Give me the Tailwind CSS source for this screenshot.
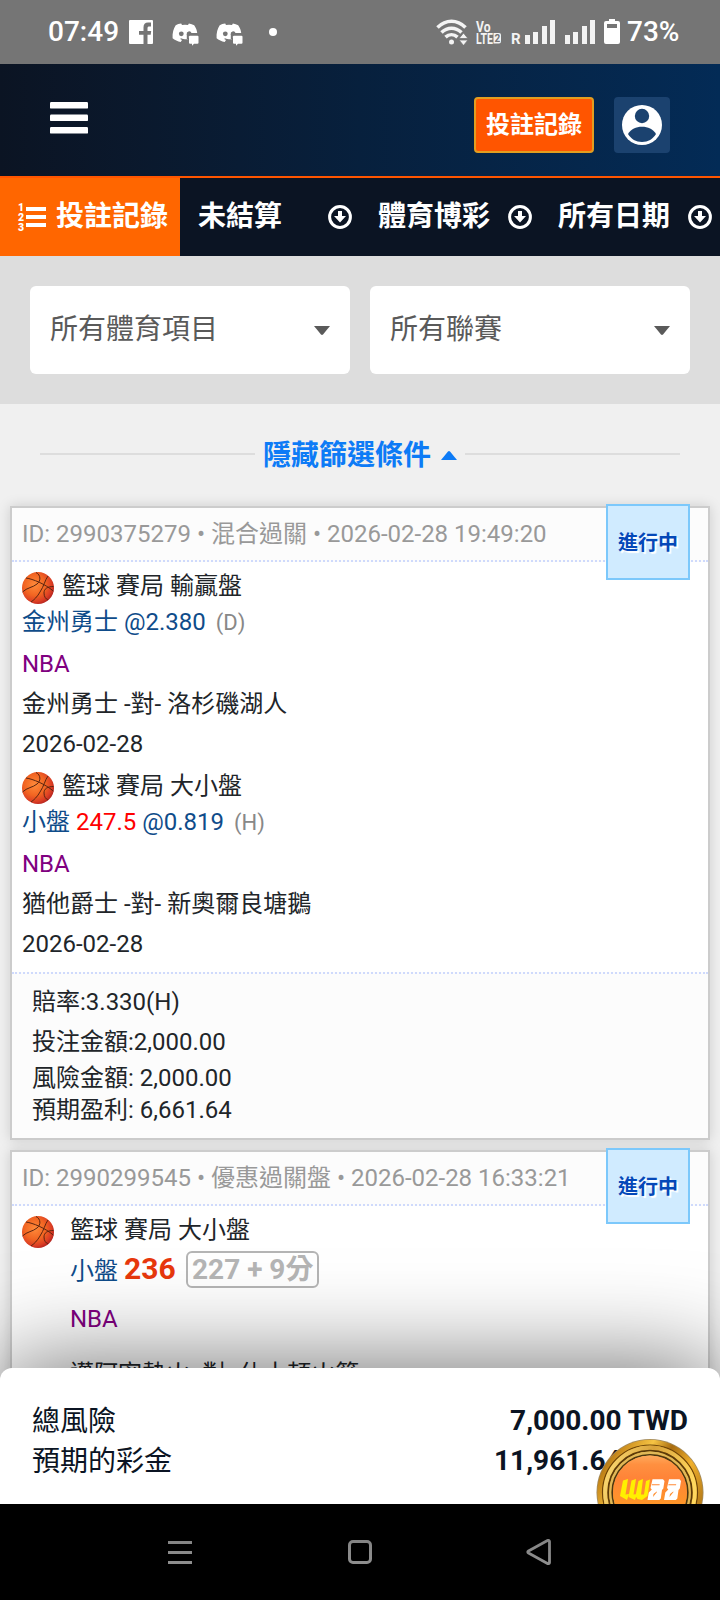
<!DOCTYPE html>
<html lang="zh-Hant">
<head>
<meta charset="utf-8">
<title>投註記錄</title>
<script src="https://cdn.jsdelivr.net/npm/@tailwindcss/browser@4"></script>
</head>
<body class="bg-black">
<svg class="absolute h-0 w-0" aria-hidden="true">
  <defs>
    <radialGradient id="ballFill" cx=".4" cy=".4" r=".66">
      <stop offset="0" stop-color="#ff8a3a"/><stop offset=".5" stop-color="#f26522"/><stop offset=".8" stop-color="#dc3e24"/><stop offset="1" stop-color="#ac1e1e"/>
    </radialGradient>
    <symbol id="ball" viewBox="0 0 32 32">
      <circle cx="16" cy="16" r="16" fill="url(#ballFill)"/>
      <g fill="none" stroke="#5a2410" stroke-width="1">
        <path d="M4 6C11 7 23 12 31.300 19"/>
        <path d="M14 .5C19 3 19 9 15 12C11 15.500 5 15.500 .5 20"/>
        <path d="M26 4C23 8 22 14 18 20C15.500 24.500 12 28 9 30"/>
        <path d="M31.500 14.500C25 14.500 22 17 22 21C22 25 24 27 26 28"/>
      </g>
    </symbol>
    <symbol id="down" viewBox="0 0 24 24">
      <circle cx="12" cy="12" r="10.400" fill="none" stroke="#fff" stroke-width="3"/>
      <path d="M10 6h4v5h4L12 17.500 6 11h4z" fill="#fff"/>
    </symbol>
    <symbol id="chat" viewBox="0 0 27 23">
      <path fill="#fff" d="M9.200.5 10 2a22 22 0 0 1 6 0l.9-1.500c2 .3 3.800.9 5.300 1.800 1.800 2.600 2.700 5 3 7.700H19.500a2.500 2.500 0 1 0-2 3.400V14.500l-1.500.2v1.500c-3 .2-5-.1-7-1l-.8.700 1.800 1-1.300 2.200C5.800 18.400 2.500 17 .6 15.300.2 10 1.500 5.500 3.700 2.300 5.300 1.300 7.200.7 9.200.5z"/>
      <circle cx="9.300" cy="10.800" r="2.400" fill="#757575"/>
      <path fill="#757575" d="M14.800 11h12v2h-10v3h-2z"/>
      <path fill="#fff" d="M18 12.800h7.500a1 1 0 0 1 1 1v6a1 1 0 0 1-1 1h-3.500l-2 2v-2h-2a1 1 0 0 1-1-1v-6a1 1 0 0 1 1-1z"/>
    </symbol>
  </defs>
</svg>

<div class="relative flex h-[1600px] w-[720px] flex-col overflow-hidden bg-[#f0f0f0] font-['Roboto','Noto_Sans_CJK_TC',sans-serif] text-2xl text-[#212529]">

  <!-- System status bar -->
  <div class="flex h-16 shrink-0 items-center bg-[#757575] pl-12 text-[28px] font-medium text-white">
    <span class="w-[81px]">07:49</span>
    <svg class="h-6 w-6" viewBox="0 0 24 24"><path fill="#fff" d="M1 0h22a1 1 0 0 1 1 1v22a1 1 0 0 1-1 1h-4.500v-9.300h3.200l.5-3.600h-3.700V8.200c0-1.200.5-1.800 1.800-1.800H22V2.500h-3c-3 0-4.500 1.700-4.500 4.700v3.900H10v3.600h4.500V24H1a1 1 0 0 1-1-1V1a1 1 0 0 1 1-1z"/></svg>
    <svg class="mt-1 ml-[19px] h-[23px] w-[27px]"><use href="#chat"/></svg>
    <svg class="mt-1 ml-[17px] h-[23px] w-[27px]"><use href="#chat"/></svg>
    <span class="ml-[26px] h-2 w-2 rounded-full bg-white"></span>
    <svg class="ml-[159px] h-[26px] w-[32px]" viewBox="0 0 32 26">
      <g fill="none" stroke="#f3f3f3" stroke-width="3.600">
        <path d="M1.500 8.500C10 .2 21 .2 29.500 8.500"/><path d="M5.500 13.500c6-5.600 14-5.600 20 0"/><path d="M9.500 18.200c3.600-3.300 8.400-3.300 12 0"/>
      </g>
      <circle cx="15.500" cy="23" r="2.500" fill="#f3f3f3"/>
      <path fill="#f3f3f3" stroke="#757575" stroke-width=".8" d="M27.500 14l4.500 5.500h-9zM27.500 26.500l4.500-5.500h-9z"/>
    </svg>
    <svg class="ml-2 h-[26px] w-[26px] overflow-visible" viewBox="0 0 26 26" fill="#f3f3f3">
      <g font-family="Roboto" font-weight="700"><text x="0" y="12.500" font-size="15.500" textLength="14.500" lengthAdjust="spacingAndGlyphs">Vo</text><text x="0" y="24.500" font-size="15.500" textLength="17" lengthAdjust="spacingAndGlyphs">LTE</text></g>
      <path d="M17.500 14h5.500a2 2 0 0 1 2 2v6.500a2 2 0 0 1-2 2h-5.500z"/>
      <text x="18.500" y="23" font-family="Roboto" font-weight="700" font-size="10" fill="#757575">2</text>
    </svg>
    <span class="mt-[14px] ml-[9px] w-[14px] text-[15px] leading-none font-bold text-[#f3f3f3]">R</span>
    <svg class="h-6 w-[30px]" viewBox="0 0 30 24" fill="#f3f3f3"><path d="M0 15h5v9H0zM8 12h5v12H8zM17 6h5v18H17zM25 0h5v24h-5z"/></svg>
    <svg class="ml-[10px] h-6 w-[30px]" viewBox="0 0 30 24" fill="#f3f3f3"><path d="M0 15h5v9H0zM8 12h5v12H8zM17 6h5v18H17zM25 0h5v24h-5z"/></svg>
    <svg class="-mt-px ml-[9px] h-[25px] w-4" viewBox="0 0 16 25"><path fill="#fff" d="M5 0h6v2h3a2 2 0 0 1 2 2v19a2 2 0 0 1-2 2H2a2 2 0 0 1-2-2V4a2 2 0 0 1 2-2h3z"/><path fill="#757575" d="M3 5h10v4H3z"/></svg>
    <span class="ml-[7px]">73%</span>
  </div>

  <!-- Site header -->
  <header class="flex h-[114px] shrink-0 items-center border-b-2 border-[#ff5500] bg-linear-to-r from-[#0b1423] via-[#07203d] to-[#032b56] pt-[10px] pr-[50px] pl-[50px]">
    <svg class="-mt-[15px] h-8 w-[38px]" viewBox="0 0 38 32" fill="#fff"><rect width="38" height="6.600" rx="1.200"/><rect y="12.500" width="38" height="6.600" rx="1.200"/><rect y="25" width="38" height="6.600" rx="1.200"/></svg>
    <button class="ml-auto flex h-14 w-[120px] items-center justify-center rounded border-2 border-[#e29e20] bg-[#ff5500] font-bold text-white">投註記錄</button>
    <div class="ml-5 flex h-14 w-14 items-center justify-center rounded bg-[#1b426f]">
      <svg class="h-10 w-10" viewBox="0 0 40 40"><circle cx="20" cy="20" r="20" fill="#fff"/><circle cx="20" cy="11" r="7.200" fill="#1b426f"/><path fill="#1b426f" d="M6 29C9 24 14 21.800 20 21.800s11 2.200 14 7.200c-3 5-8 8-14 8s-11-3-14-8z"/></svg>
    </div>
  </header>

  <!-- Tabs -->
  <nav class="grid h-[78px] shrink-0 grid-cols-4 bg-[#0b1423] text-[28px] font-bold text-white">
    <div class="flex items-center bg-[#ff6600] pl-[18px]">
      <svg class="-mt-px h-[30px] w-7 shrink-0 overflow-visible" viewBox="0 0 28 30" fill="#fff"><path d="M8 5h20v4H8zM8 13h20v4H8zM8 21h20v4H8z"/><g font-family="Roboto" font-weight="900" font-size="10.500"><text x="0" y="9">1</text><text x="0" y="19">2</text><text x="0" y="28.500">3</text></g></svg>
      <span class="ml-[10px] whitespace-nowrap">投註記錄</span>
    </div>
    <div class="flex items-center justify-between pr-[8px] pl-[18px]"><span>未結算</span><svg class="h-6 w-6 shrink-0"><use href="#down"/></svg></div>
    <div class="flex items-center justify-between pr-[8px] pl-[18px]"><span>體育博彩</span><svg class="h-6 w-6 shrink-0"><use href="#down"/></svg></div>
    <div class="flex items-center justify-between pr-[8px] pl-[18px]"><span>所有日期</span><svg class="h-6 w-6 shrink-0"><use href="#down"/></svg></div>
  </nav>

  <!-- Filters -->
  <section class="flex h-[148px] shrink-0 items-center gap-5 bg-[#ddd] px-[30px] text-[28px] text-[#5a5a5a]">
    <div class="flex h-[88px] flex-1 items-center justify-between rounded-md bg-white px-5"><span>所有體育項目</span><svg class="h-[9px] w-4" viewBox="0 0 16 9"><path fill="#5a5a5a" d="M0 0h16L9 8.500q-1 .8-2 0z"/></svg></div>
    <div class="flex h-[88px] flex-1 items-center justify-between rounded-md bg-white px-5"><span>所有聯賽</span><svg class="h-[9px] w-4" viewBox="0 0 16 9"><path fill="#5a5a5a" d="M0 0h16L9 8.500q-1 .8-2 0z"/></svg></div>
  </section>
  <div class="flex h-[102px] shrink-0 items-center px-10 text-[28px] font-bold text-[#0d7bf6]">
    <span class="mb-[2px] h-[2px] flex-1 bg-[#ddd]"></span>
    <span class="ml-2 pt-[2px]">隱藏篩選條件</span>
    <svg class="mr-2 ml-[10px] h-[9px] w-4" viewBox="0 0 16 9"><path fill="#0d7bf6" d="M0 9h16L9 .5Q8-.3 7 .5z"/></svg>
    <span class="mb-[2px] h-[2px] flex-1 bg-[#ddd]"></span>
  </div>

  <!-- Bet slips -->
  <main class="flex flex-col gap-[10px] px-[10px]">
    <article class="relative border-2 border-[#ccc] bg-white shadow-[0_0_12px_rgba(0,0,0,0.15)]">
      <div class="h-[54px] border-b-2 border-dotted border-[#cfdafc] bg-[#fcfcfc] px-[10px] leading-[52px] text-[#999]">ID: 2990375279 • 混合過關 • 2026-02-28 19:49:20</div>
      <div class="absolute -top-1 right-[18px] flex h-[76px] w-[84px] items-center justify-center border-2 border-[#7cc8fb] bg-[#d0ebff] pt-px text-xl font-bold text-[#0548b8] [text-shadow:2px_2px_1px_#fff]">進行中</div>
      <div class="px-[10px] pt-1 pb-[6px]">
        <div class="pb-[2px]">
          <div class="flex h-10 items-center gap-2"><svg class="mt-1 h-8 w-8"><use href="#ball"/></svg><span>籃球 賽局 輸贏盤</span></div>
          <div class="h-8 leading-8 text-[#0f4c8a]">金州勇士 @2.380 <span class="ml-1 text-[22px] text-[#888]">(D)</span></div>
          <div class="mt-[6px] h-10 leading-10 text-[#800080]">NBA</div>
          <div class="h-10 leading-10">金州勇士 -對- 洛杉磯湖人</div>
          <div class="h-10 leading-10">2026-02-28</div>
        </div>
        <div class="pb-[2px]">
          <div class="flex h-10 items-center gap-2"><svg class="mt-1 h-8 w-8"><use href="#ball"/></svg><span>籃球 賽局 大小盤</span></div>
          <div class="h-8 leading-8 text-[#0f4c8a]">小盤 <span class="text-[#f00]">247.5</span> @0.819 <span class="ml-1 text-[22px] text-[#888]">(H)</span></div>
          <div class="mt-[6px] h-10 leading-10 text-[#800080]">NBA</div>
          <div class="h-10 leading-10">猶他爵士 -對- 新奧爾良塘鵝</div>
          <div class="h-10 leading-10">2026-02-28</div>
        </div>
      </div>
      <div class="border-t-2 border-dotted border-[#cfdafc] bg-[#fcfcfc] px-5 pt-2 pb-3">
        <div class="h-10 leading-10">賠率:3.330(H)</div>
        <div class="h-10 leading-10">投注金額:2,000.00</div>
        <div class="h-8 leading-8">風險金額: 2,000.00</div>
        <div class="h-8 leading-8">預期盈利: 6,661.64</div>
      </div>
    </article>

    <article class="relative h-[300px] border-2 border-[#ccc] bg-white shadow-[0_0_12px_rgba(0,0,0,0.15)]">
      <div class="h-[54px] border-b-2 border-dotted border-[#cfdafc] bg-[#fcfcfc] px-[10px] leading-[52px] text-[#999]">ID: 2990299545 • 優惠過關盤 • 2026-02-28 16:33:21</div>
      <div class="absolute -top-1 right-[18px] flex h-[76px] w-[84px] items-center justify-center border-2 border-[#7cc8fb] bg-[#d0ebff] pt-px text-xl font-bold text-[#0548b8] [text-shadow:2px_2px_1px_#fff]">進行中</div>
      <div class="flex gap-4 px-[10px] pt-1">
        <svg class="mt-[6px] h-8 w-8"><use href="#ball"/></svg>
        <div>
          <div class="h-10 leading-10">籃球 賽局 大小盤</div>
          <div class="flex h-[38px] items-baseline leading-[38px] text-[#0f4c8a]">小盤<b class="ml-[6px] w-[52px] text-[30px] font-bold text-[#e8380d]">236</b><b class="ml-[10px] h-[37px] rounded-md border-2 border-[#b5b5b5] px-1 text-[28px] leading-[33px] text-[#b5b5b5]">227 + 9分</b></div>
          <div class="mt-[11px] h-10 leading-10 text-[#800080]">NBA</div>
          <div class="mt-[15px] h-10 leading-10">邁阿密熱火 -對- 休士頓火箭</div>
        </div>
      </div>
    </article>
  </main>

  <!-- Totals sheet, pinned above the system navigation -->
  <footer class="absolute inset-x-0 bottom-0">
    <div class="relative h-[136px] rounded-t-xl bg-white px-8 pt-[33px] text-[28px] leading-10 text-[#0b1423] shadow-[0_0_100px_rgba(0,0,0,0.6)]">
      <div class="flex justify-between"><span class="pt-px leading-[39px]">總風險</span><span class="font-bold">7,000.00 TWD</span></div>
      <div class="flex justify-between"><span class="pt-px leading-[39px]">預期的彩金</span><span class="font-bold">11,961.64 TWD</span></div>
      <svg class="absolute top-[71px] left-[596px] h-[65px] w-[108px]" viewBox="0 0 108 65">
        <defs>
          <linearGradient id="gold" x1="0" y1="0" x2="1" y2=".6"><stop offset="0" stop-color="#6a3f06"/><stop offset=".2" stop-color="#c98a1c"/><stop offset=".4" stop-color="#f6c444"/><stop offset=".55" stop-color="#a86c10"/><stop offset=".75" stop-color="#f0b02c"/><stop offset="1" stop-color="#b57a18"/></linearGradient>
          <linearGradient id="gold2" x1="0" y1="0" x2="1" y2=".3"><stop offset="0" stop-color="#ffe07a"/><stop offset=".5" stop-color="#d9a23a"/><stop offset="1" stop-color="#ffd75e"/></linearGradient>
          <linearGradient id="disc" x1="0" y1="0" x2="0" y2="1"><stop offset="0" stop-color="#ffa95c"/><stop offset=".12" stop-color="#ff9040"/><stop offset=".3" stop-color="#ff8438"/><stop offset=".75" stop-color="#ff9a24"/></linearGradient>
        </defs>
        <circle cx="54" cy="53.500" r="53.500" fill="#a08a60"/>
        <circle cx="54" cy="53.500" r="52.700" fill="url(#gold)"/>
        <circle cx="54" cy="53.500" r="47.500" fill="none" stroke="#6b4208" stroke-width="1.200"/>
        <circle cx="54" cy="53.500" r="44.800" fill="none" stroke="url(#gold2)" stroke-width="4"/>
        <circle cx="54" cy="53.500" r="41.800" fill="none" stroke="#5c3a0a" stroke-width="1.800"/>
        <circle cx="54" cy="53.500" r="39.800" fill="none" stroke="#e0b858" stroke-width="2.200"/>
        <circle cx="54" cy="53.500" r="37.800" fill="none" stroke="#4a3614" stroke-width="1.600"/>
        <circle cx="54" cy="53.500" r="37" fill="url(#disc)"/>
        <g fill="#fff000">
          <path d="M27 41.500 32 40 29.500 55.500 33 55 31 61 24 57zM35.500 41.500 40 40 37.500 55.500 41 55 39 61 32.500 58zM42.500 42 47 40 45 55.500 48 55.500 50 42 54 40.500 51.500 57 46 61 41.500 60 39.500 57z"/>
        </g>
        <g fill="#fff" fill-rule="evenodd">
          <path d="M56.500 40.300H67L68.500 42 67.300 49.500 66 51 64.800 59.500 63.300 61H51.500L52.800 53.500 55.800 50.500 54.500 49zM56 45.300 55.800 46.300H63.500L63.700 45.300zM57 58 61 53 60.700 52.600 57.500 55z"/>
          <path d="M73 40.300H83.500L85 42 83.800 49.500 82.500 51 81.300 59.500 79.800 61H68L69.300 53.500 72.300 50.500 71 49zM72.500 45.300 72.300 46.300H80L80.200 45.300zM73.500 58 77.500 53 77.200 52.600 74 55z"/>
        </g>
      </svg>
    </div>
    <div class="flex h-24 items-center bg-black pl-[168px]">
      <svg class="h-6 w-6" viewBox="0 0 24 24" fill="#999"><path d="M0 1h24v3H0zM0 11h24v3H0zM0 21h24v3H0z"/></svg>
      <span class="ml-[156px] h-6 w-6 rounded-[5px] border-[3px] border-[#999]"></span>
      <svg class="ml-[154px] h-[26px] w-[25px]" viewBox="0 0 25 26"><path fill="none" stroke="#999" stroke-width="2.800" stroke-linejoin="round" d="M23.500 2.500v21c0 1-1 1.500-2 1L2.500 14q-1.500-1 0-2L21.500 1.500c1-.5 2 0 2 1z"/></svg>
    </div>
  </footer>
</div>
</body>
</html>
